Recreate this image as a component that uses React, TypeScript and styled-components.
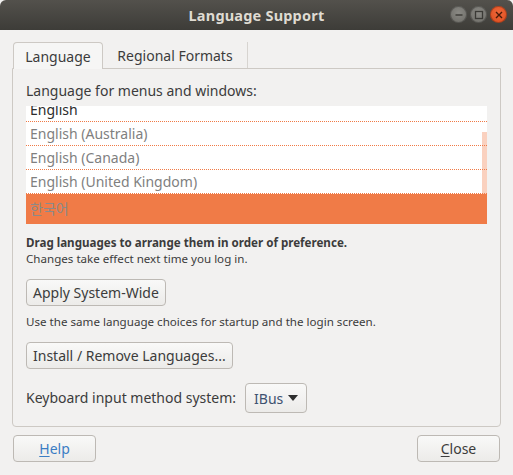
import styled, { createGlobalStyle } from "styled-components";

const GlobalStyle = createGlobalStyle`
  html, body {
    margin: 0;
    padding: 0;
    background: #f2f1f0;
  }
  body {
    font-family: "Noto Sans", "Noto Sans CJK KR", sans-serif;
    color: #3c3c3c;
  }
`;

const languages = [
  { name: "English", primary: true },
  { name: "English (Australia)" },
  { name: "English (Canada)" },
  { name: "English (United Kingdom)" },
];

const App = () => {
  return (
    <Window>
      <GlobalStyle />
      <TitleBar>
        <Title>Language Support</Title>
        <WinButtons>
          <WinButton>
            <svg width="10" height="10" viewBox="0 0 10 10">
              <path d="M1.5 5h7" stroke="#3b3a36" strokeWidth="1.4" />
            </svg>
          </WinButton>
          <WinButton>
            <svg width="10" height="10" viewBox="0 0 10 10">
              <rect x="1.5" y="1.5" width="7" height="7" fill="none" stroke="#3b3a36" strokeWidth="1.3" />
            </svg>
          </WinButton>
          <WinButton close>
            <svg width="10" height="10" viewBox="0 0 10 10">
              <path d="M2 2l6 6M8 2l-6 6" stroke="#4a1a08" strokeWidth="1.4" />
            </svg>
          </WinButton>
        </WinButtons>
      </TitleBar>

      <Body>
        <Tabs>
          <Tab active>Language</Tab>
          <Tab>Regional Formats</Tab>
        </Tabs>
        <Frame>
          <Label>Language for menus and windows:</Label>
          <List>
            <ListInner>
              {languages.map((item, index) => (
                <ListRow key={`lang${index}`} primary={item.primary}>
                  {item.name}
                </ListRow>
              ))}
              <DragRow>한국어</DragRow>
            </ListInner>
            <ScrollThumb />
          </List>
          <Hint>
            <strong>Drag languages to arrange them in order of preference.</strong>
            <br />
            Changes take effect next time you log in.
          </Hint>
          <Button>Apply System-Wide</Button>
          <Note>Use the same language choices for startup and the login screen.</Note>
          <Button>Install / Remove Languages...</Button>
          <KeyboardRow>
            <Label>Keyboard input method system:</Label>
            <Combo>
              <span>IBus</span>
              <svg width="10" height="6" viewBox="0 0 10 6">
                <path d="M0 0h10L5 6z" fill="#2e2e2e" />
              </svg>
            </Combo>
          </KeyboardRow>
        </Frame>
        <Footer>
          <FooterButton link>
            <u>H</u>elp
          </FooterButton>
          <FooterButton>
            <u>C</u>lose
          </FooterButton>
        </Footer>
      </Body>
    </Window>
  );
};

export default App;

const Window = styled.div`
  width: 513px;
  height: 475px;
  display: flex;
  flex-direction: column;
  background: #f2f1f0;
  overflow: hidden;
`;

const TitleBar = styled.div`
  height: 30px;
  flex-shrink: 0;
  display: flex;
  align-items: center;
  justify-content: center;
  position: relative;
  border-radius: 6px 6px 0 0;
  background: linear-gradient(#53514c, #3d3c38);
`;

const Title = styled.div`
  color: #dfdbd2;
  font-size: 14.5px;
  font-weight: 700;
  letter-spacing: 0.2px;
`;

const WinButtons = styled.div`
  position: absolute;
  right: 6px;
  top: 6px;
  display: flex;
  gap: 3px;
`;

const WinButton = styled.div<{ close?: boolean }>`
  width: 17px;
  height: 17px;
  border-radius: 50%;
  display: flex;
  align-items: center;
  justify-content: center;
  background: ${({ close }) =>
    close
      ? "radial-gradient(circle at 50% 40%, #f0683a, #d9491b)"
      : "radial-gradient(circle at 50% 40%, #8a8984, #6a6964)"};
  box-shadow: inset 0 0 0 1px rgba(0, 0, 0, 0.25);
`;

const Body = styled.div`
  flex: 1;
  display: flex;
  flex-direction: column;
  padding: 12px 12px 0 12px;
`;

const Tabs = styled.div`
  display: flex;
  height: 27px;
  padding-left: 1px;
  position: relative;
  z-index: 1;
  margin-bottom: -1px;
`;

const Tab = styled.div<{ active?: boolean }>`
  display: flex;
  align-items: center;
  justify-content: center;
  font-size: 14px;
  color: #3c3c3c;
  box-sizing: border-box;
  ${({ active }) =>
    active
      ? `
    width: 90px;
    background: #f6f6f5;
    border: 1px solid #cdc9c4;
    border-bottom: none;
    border-radius: 4px 4px 0 0;
  `
      : `
    width: 145px;
    margin: 0 0 1px 0;
    border-right: 1px solid #d7d4d0;
    height: 26px;
  `}
`;

const Frame = styled.div`
  width: 489px;
  box-sizing: border-box;
  height: 359px;
  border: 1px solid #cdc9c4;
  border-radius: 0 0 4px 4px;
  padding: 13px 13px 0 13px;
  display: flex;
  flex-direction: column;
  align-items: flex-start;
`;

const Label = styled.div`
  font-size: 14px;
  line-height: 18px;
  color: #3c3c3c;
`;

const List = styled.div`
  margin-top: 6px;
  width: 461px;
  height: 118px;
  background: #ffffff;
  overflow: hidden;
  position: relative;
  flex-shrink: 0;
`;

const ListInner = styled.div`
  margin-top: -8px;
`;

const ListRow = styled.div<{ primary?: boolean }>`
  height: 24px;
  box-sizing: border-box;
  line-height: 23px;
  padding-left: 4px;
  font-size: 14px;
  color: ${({ primary }) => (primary ? "#2c2c2c" : "#7f7f7f")};
  border-bottom: 1px dotted #f07a46;
`;

const DragRow = styled.div`
  height: 30px;
  line-height: 30px;
  padding-left: 4px;
  background: #f07b47;
  color: #8a8a8a;
  font-size: 14px;
`;

const ScrollThumb = styled.div`
  position: absolute;
  right: 0;
  top: 26px;
  width: 5px;
  height: 62px;
  background: rgba(240, 123, 71, 0.35);
`;

const Hint = styled.div`
  margin-top: 11px;
  font-size: 11.6px;
  line-height: 16px;
  color: #3c3c3c;
`;

const Note = styled.div`
  margin-top: 8px;
  font-size: 11.6px;
  line-height: 16px;
  color: #3c3c3c;
`;

const Button = styled.div`
  margin-top: 12px;
  height: 27px;
  box-sizing: border-box;
  padding: 0 6px;
  display: flex;
  align-items: center;
  font-size: 14px;
  color: #3c3c3c;
  border: 1px solid #bdb9b4;
  border-radius: 4px;
  background: linear-gradient(#f9f9f8, #ecebe9);
`;

const KeyboardRow = styled.div`
  margin-top: 14px;
  display: flex;
  align-items: center;
  gap: 9px;
`;

const Combo = styled.div`
  height: 30px;
  width: 62px;
  box-sizing: border-box;
  padding: 0 8px 0 8px;
  display: flex;
  align-items: center;
  justify-content: space-between;
  font-size: 14px;
  color: #3e5270;
  border: 1px solid #bdb9b4;
  border-radius: 4px;
  background: linear-gradient(#f9f9f8, #ecebe9);
`;

const Footer = styled.div`
  margin-top: 8px;
  display: flex;
  justify-content: space-between;
  padding: 0 1px;
  width: 489px;
  box-sizing: border-box;
`;

const FooterButton = styled.div<{ link?: boolean }>`
  width: 83px;
  height: 27px;
  box-sizing: border-box;
  display: flex;
  align-items: center;
  justify-content: center;
  font-size: 14px;
  color: ${({ link }) => (link ? "#3b7dc4" : "#3c3c3c")};
  border: 1px solid #bdb9b4;
  border-radius: 4px;
  background: linear-gradient(#f9f9f8, #ecebe9);
  u {
    text-decoration-thickness: 1px;
    text-underline-offset: 2px;
  }
`;
